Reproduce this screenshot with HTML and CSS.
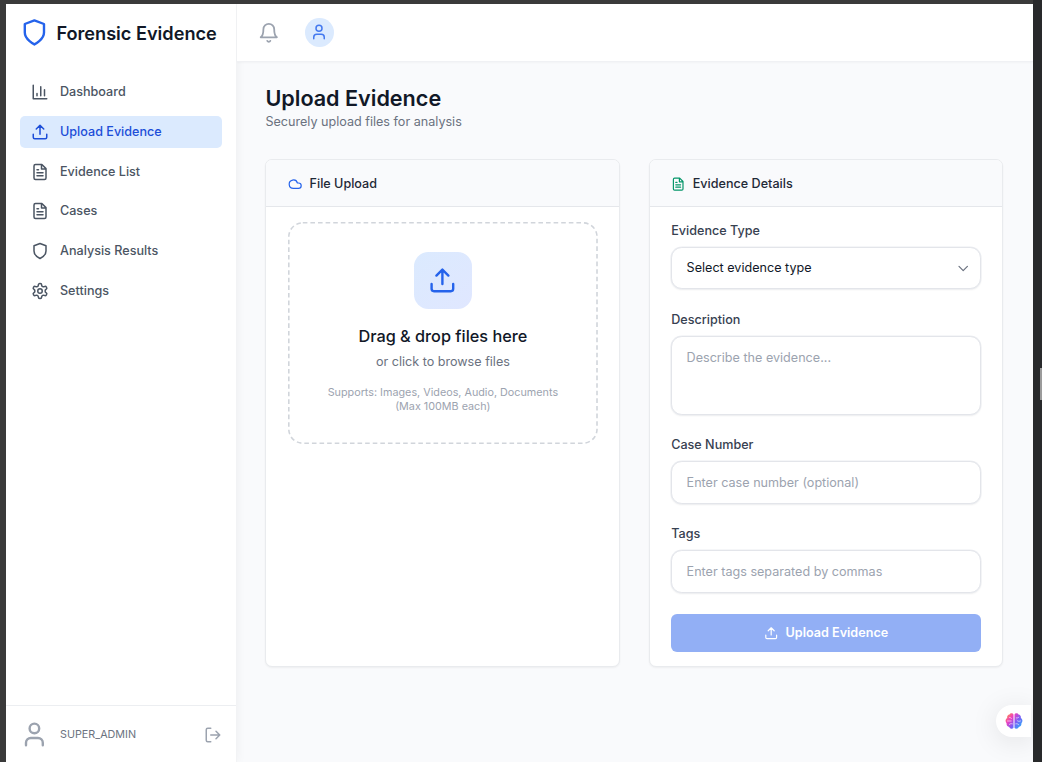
FILE: index.html
```html
<!DOCTYPE html>
<html lang="en">
<head>
<meta charset="utf-8">
<title>Forensic Evidence</title>
<link rel="stylesheet" href="styles.css">
</head>
<body>
<svg class="sprite" width="0" height="0" aria-hidden="true">
  <symbol id="shield" viewBox="0 0 24 24"><path d="M12 22s8-4 8-10V5l-8-3-8 3v7c0 6 8 10 8 10"/></symbol>
  <symbol id="chart" viewBox="0 0 24 24"><path d="M3 3v18h18M18 17V9M13 17V5M8 17v-3"/></symbol>
  <symbol id="upload" viewBox="0 0 24 24"><path d="M21 15v4a2 2 0 0 1-2 2H5a2 2 0 0 1-2-2v-4M17 8l-5-5-5 5M12 3v12"/></symbol>
  <symbol id="file" viewBox="0 0 24 24"><path d="M14.5 2H6a2 2 0 0 0-2 2v16a2 2 0 0 0 2 2h12a2 2 0 0 0 2-2V7.5L14.500 2zM14 2v6h6M16 13H8M16 17H8M10 9H8"/></symbol>
  <symbol id="gear" viewBox="0 0 24 24"><path d="M12.220 2h-.44a2 2 0 0 0-2 2v.18a2 2 0 0 1-1 1.730l-.43.25a2 2 0 0 1-2 0l-.15-.08a2 2 0 0 0-2.730.73l-.22.38a2 2 0 0 0 .73 2.730l.15.1a2 2 0 0 1 1 1.720v.51a2 2 0 0 1-1 1.740l-.15.09a2 2 0 0 0-.73 2.730l.22.38a2 2 0 0 0 2.730.73l.15-.08a2 2 0 0 1 2 0l.43.25a2 2 0 0 1 1 1.730V20a2 2 0 0 0 2 2h.44a2 2 0 0 0 2-2v-.18a2 2 0 0 1 1-1.730l.43-.25a2 2 0 0 1 2 0l.15.08a2 2 0 0 0 2.730-.73l.22-.39a2 2 0 0 0-.73-2.730l-.15-.08a2 2 0 0 1-1-1.740v-.5a2 2 0 0 1 1-1.740l.15-.09a2 2 0 0 0 .73-2.730l-.22-.38a2 2 0 0 0-2.730-.73l-.15.08a2 2 0 0 1-2 0l-.43-.25a2 2 0 0 1-1-1.730V4a2 2 0 0 0-2-2z"/><circle cx="12" cy="12" r="3"/></symbol>
  <symbol id="user" viewBox="0 0 24 24"><path d="M19 21v-2a4 4 0 0 0-4-4H9a4 4 0 0 0-4 4v2"/><circle cx="12" cy="7" r="4"/></symbol>
  <symbol id="logout" viewBox="0 0 24 24"><path d="M9 21H5a2 2 0 0 1-2-2V5a2 2 0 0 1 2-2h4M16 17l5-5-5-5M21 12H9"/></symbol>
  <symbol id="bell" viewBox="0 0 24 24"><path d="M6 8a6 6 0 0 1 12 0c0 7 3 9 3 9H3s3-2 3-9M10.300 21a1.940 1.940 0 0 0 3.400 0"/></symbol>
  <symbol id="cloud" viewBox="0 0 24 24"><path d="M17.500 19H9a7 7 0 1 1 6.710-9h1.790a4.500 4.500 0 1 1 0 9Z"/></symbol>
  <symbol id="chevron" viewBox="0 0 24 24"><path d="m5 9 7 7 7-7"/></symbol>
</svg>

<div class="frame">
  <div class="app">
    <aside class="sidebar">
      <div class="brand"><svg class="icon icon-logo"><use href="#shield"/></svg><span>Forensic Evidence</span></div>
      <nav class="nav">
        <a class="nav-item"><svg class="icon"><use href="#chart"/></svg>Dashboard</a>
        <a class="nav-item active"><svg class="icon"><use href="#upload"/></svg>Upload Evidence</a>
        <a class="nav-item"><svg class="icon"><use href="#file"/></svg>Evidence List</a>
        <a class="nav-item"><svg class="icon"><use href="#file"/></svg>Cases</a>
        <a class="nav-item"><svg class="icon"><use href="#shield"/></svg>Analysis Results</a>
        <a class="nav-item"><svg class="icon"><use href="#gear"/></svg>Settings</a>
      </nav>
      <div class="account">
        <svg class="icon icon-account"><use href="#user"/></svg>
        <span class="role">SUPER_ADMIN</span>
        <svg class="icon"><use href="#logout"/></svg>
      </div>
    </aside>

    <div class="content">
      <header class="topbar">
        <svg class="icon icon-bell"><use href="#bell"/></svg>
        <span class="avatar"><svg class="icon"><use href="#user"/></svg></span>
      </header>
      <main class="page">
        <h1>Upload Evidence</h1>
        <p class="lead">Securely upload files for analysis</p>
        <div class="cards">
          <section class="card">
            <div class="card-head"><svg class="icon icon-cloud"><use href="#cloud"/></svg><h2>File Upload</h2></div>
            <div class="card-body">
              <div class="dropzone">
                <svg class="dash" aria-hidden="true"><rect x="0.8" y="0.8" rx="14" ry="14"/></svg>
                <span class="tile"><svg class="icon"><use href="#upload"/></svg></span>
                <h3>Drag &amp; drop files here</h3>
                <p class="browse">or click to browse files</p>
                <p class="hint">Supports: Images, Videos, Audio, Documents<br>(Max 100MB each)</p>
              </div>
            </div>
          </section>
          <section class="card">
            <div class="card-head"><svg class="icon icon-details"><use href="#file"/></svg><h2>Evidence Details</h2></div>
            <form class="card-body form">
              <div class="field"><label>Evidence Type</label>
                <div class="control select"><span>Select evidence type</span><svg class="icon"><use href="#chevron"/></svg></div></div>
              <div class="field"><label>Description</label>
                <textarea class="control area" placeholder="Describe the evidence..."></textarea></div>
              <div class="field"><label>Case Number</label>
                <input class="control" placeholder="Enter case number (optional)"></div>
              <div class="field"><label>Tags</label>
                <input class="control" placeholder="Enter tags separated by commas"></div>
              <button class="submit" type="button" disabled><svg class="icon"><use href="#upload"/></svg>Upload Evidence</button>
            </form>
          </section>
        </div>
      </main>
    </div>
    <div class="assistant">
      <svg viewBox="0 0 18 18" width="18" height="18">
        <defs><linearGradient id="brain" x1="0" y1="0.1" x2="1" y2="0.9"><stop offset="0" stop-color="#ff9a3c"/><stop offset=".3" stop-color="#ee3fc0"/><stop offset=".6" stop-color="#7c5cf6"/><stop offset="1" stop-color="#22b8fa"/></linearGradient></defs>
        <path fill="url(#brain)" d="M8.500 2.500C7.700.7 5.200.8 4.500 2.600 2.700 2.800 1.800 4.500 2.200 6 .2 7 .1 10 1.600 11.200c-.3 2 .9 3.600 2.600 3.800.9 2.100 3.500 2.300 4.300.7zM9.500 2.500C10.300.7 12.800.8 13.500 2.600c1.800.2 2.700 1.900 2.300 3.400 2 1 2.100 4 .6 5.200.3 2-.9 3.600-2.600 3.800-.9 2.100-3.500 2.300-4.300.7z"/>
        <path fill="none" stroke="#fff" stroke-opacity=".75" stroke-width=".8" stroke-linecap="round" d="M2.500 9h3.700M4.500 5.500c1 0 1.500.4 2 1M4.300 12.500c1-1 2-1 3-.7M15.500 9c-1.500.6-2.700.4-3.500-.6M13.800 5.200c-.8.7-1.600.9-2.500.7M13.700 12.700c-.8-.9-1.800-1.100-2.900-.9"/>
      </svg>
    </div>
  </div>
  <span class="scroll-thumb"></span>
</div>
</body>
</html>
```

FILE: styles.css
```css
html { font-size: 14.4px; }
* { box-sizing: border-box; margin: 0; }
body {
  font-family: Inter, "Liberation Sans", sans-serif;
  font-size: .875rem;
  line-height: 1.25rem;
  color: #111827;
}
.sprite { position: absolute; }
.icon {
  width: 1.25rem;
  height: 1.25rem;
  flex: none;
  fill: none;
  stroke: currentColor;
  stroke-width: 2;
  stroke-linecap: round;
  stroke-linejoin: round;
}
.frame {
  position: relative;
  height: 762px;
  padding: 4px 9px 0 6px;
  background: linear-gradient(90deg, #3a3a3a 1033px, #28292b 1033px);
  overflow: hidden;
}
.app {
  position: relative;
  display: flex;
  height: 100%;
  background: #f9fafc;
  overflow: hidden;
}

.sidebar {
  display: flex;
  flex-direction: column;
  width: 231px;
  background: #fff;
  border-right: 1px solid #f2f3f5;
  box-shadow: 0 0 10px rgba(0, 0, 0, .05);
}
.brand {
  display: flex;
  align-items: center;
  gap: .5rem;
  height: 57.4px;
  padding: 0 1rem;
  font-size: 18.15px;
  font-weight: 600;
  white-space: nowrap;
}
.icon-logo { width: 2rem; height: 2rem; color: #2563eb; }
.nav {
  flex: 1;
  display: flex;
  flex-direction: column;
  gap: 7.3px;
  padding: 14.6px 14px 0 14.4px;
}
.nav-item {
  display: flex;
  align-items: center;
  gap: .75rem;
  height: 2.25rem;
  padding: 0 .75rem;
  border-radius: 5px;
  font-weight: 500;
  color: #4b5563;
}
.nav-item.active { background: #dbeafe; color: #1d4ed8; }
.account {
  display: flex;
  align-items: center;
  gap: .75rem;
  height: 57px;
  padding: 1px 1rem 0;
  border-top: 1px solid #eceef1;
  color: #9ca3af;
}
.icon-account { width: 2rem; height: 2rem; }
.role { flex: 1; font-size: .75rem; color: #6b7280; }

.content { flex: 1; display: flex; flex-direction: column; }
.topbar {
  display: flex;
  align-items: center;
  gap: 1.75rem;
  height: 58px;
  padding-left: 21px;
  background: #fff;
  border-bottom: 1px solid #f0f1f4;
  box-shadow: 0 1px 2px rgba(0, 0, 0, .03);
}
.icon-bell { width: 1.5rem; height: 1.5rem; color: #9ca3af; }
.avatar {
  display: grid;
  place-items: center;
  width: 2rem;
  height: 2rem;
  border-radius: 50%;
  background: #dbeafe;
  color: #4378ef;
}
.page { padding: 24px 30px 0 28.4px; }
h1 { font-size: 1.5rem; line-height: 1.75rem; font-weight: 600; }
.lead { margin-top: 2px; color: #6b7280; }
.cards {
  display: grid;
  grid-template-columns: 1fr 1fr;
  gap: 2rem;
  margin-top: 27.8px;
}
.card {
  height: 508px;
  background: #fff;
  border: 1px solid #e9ebee;
  border-radius: 7px;
  box-shadow: 0 1px 2px rgba(0, 0, 0, .05);
  overflow: hidden;
}
.card-head {
  display: flex;
  align-items: center;
  gap: .5rem;
  height: 47.4px;
  padding: 1px 1.5rem 0;
  background: #f9fafc;
  border-bottom: 1px solid #e5e7eb;
}
.card-head .icon { width: 1rem; height: 1rem; }
.icon-cloud { color: #2563eb; }
.icon-details { color: #059669; }
h2 { font-size: .875rem; font-weight: 500; color: #1f2937; }
.card-body { padding: 1rem 21px 1rem 1.5rem; }

.dropzone {
  position: relative;
  display: flex;
  flex-direction: column;
  align-items: center;
  height: 222px;
  padding-top: 30px;
  text-align: center;
}
.dash { position: absolute; inset: 0; width: 100%; height: 100%; }
.dash rect {
  width: calc(100% - 1.6px);
  height: calc(100% - 1.6px);
  fill: none;
  stroke: #d1d5db;
  stroke-width: 1.6;
  stroke-dasharray: 4.6 3;
}
.tile {
  display: grid;
  place-items: center;
  width: 4rem;
  height: 4rem;
  border-radius: 1rem;
  background: linear-gradient(135deg, #dbeafe, #e0e7ff);
  color: #2563eb;
}
.tile .icon { width: 2rem; height: 2rem; }
h3 { margin-top: 1rem; font-size: 16.3px; line-height: 1.75rem; font-weight: 500; }
.browse { margin-top: .25rem; color: #6b7280; }
.hint { margin-top: 15px; font-size: .75rem; line-height: 14.2px; color: #9ca3af; }

.form { display: flex; flex-direction: column; gap: 1.5rem; }
.field { display: flex; flex-direction: column; gap: .5rem; }
label { font-weight: 500; color: #374151; }
.control {
  width: 100%;
  height: 42.4px;
  padding: 0 1rem;
  font: inherit;
  color: #111827;
  background: #fff;
  border: 1px solid #e3e5ea;
  border-radius: .75rem;
  box-shadow: 0 0 0 .5px #eceef2, 0 1px 2px rgba(0, 0, 0, .07);
  outline: none;
}
.control::placeholder { color: #9ca3af; opacity: 1; }
.select { display: flex; align-items: center; justify-content: space-between; padding-right: .7rem; }
.select .icon { width: 1rem; height: 1rem; color: #6b7280; }
.area { height: 78.4px; padding: 11.6px 1rem; resize: none; }
.submit {
  display: flex;
  align-items: center;
  justify-content: center;
  gap: .5rem;
  height: 37.4px;
  border: 0;
  border-radius: 6px;
  background: #92aff5;
  color: #fff;
  font: inherit;
  font-weight: 600;
}
.submit .icon { width: 1rem; height: 1rem; }

.assistant {
  position: absolute;
  right: 2px;
  top: 701px;
  display: flex;
  align-items: center;
  width: 35px;
  height: 32px;
  padding-left: 9px;
  border-radius: 16px 0 0 16px;
  background: #fff;
  box-shadow: 0 4px 28px rgba(0, 0, 0, .1);
}
.scroll-thumb {
  position: absolute;
  right: 0;
  top: 368px;
  width: 2px;
  height: 32px;
  background: #9b9b9b;
}
```
